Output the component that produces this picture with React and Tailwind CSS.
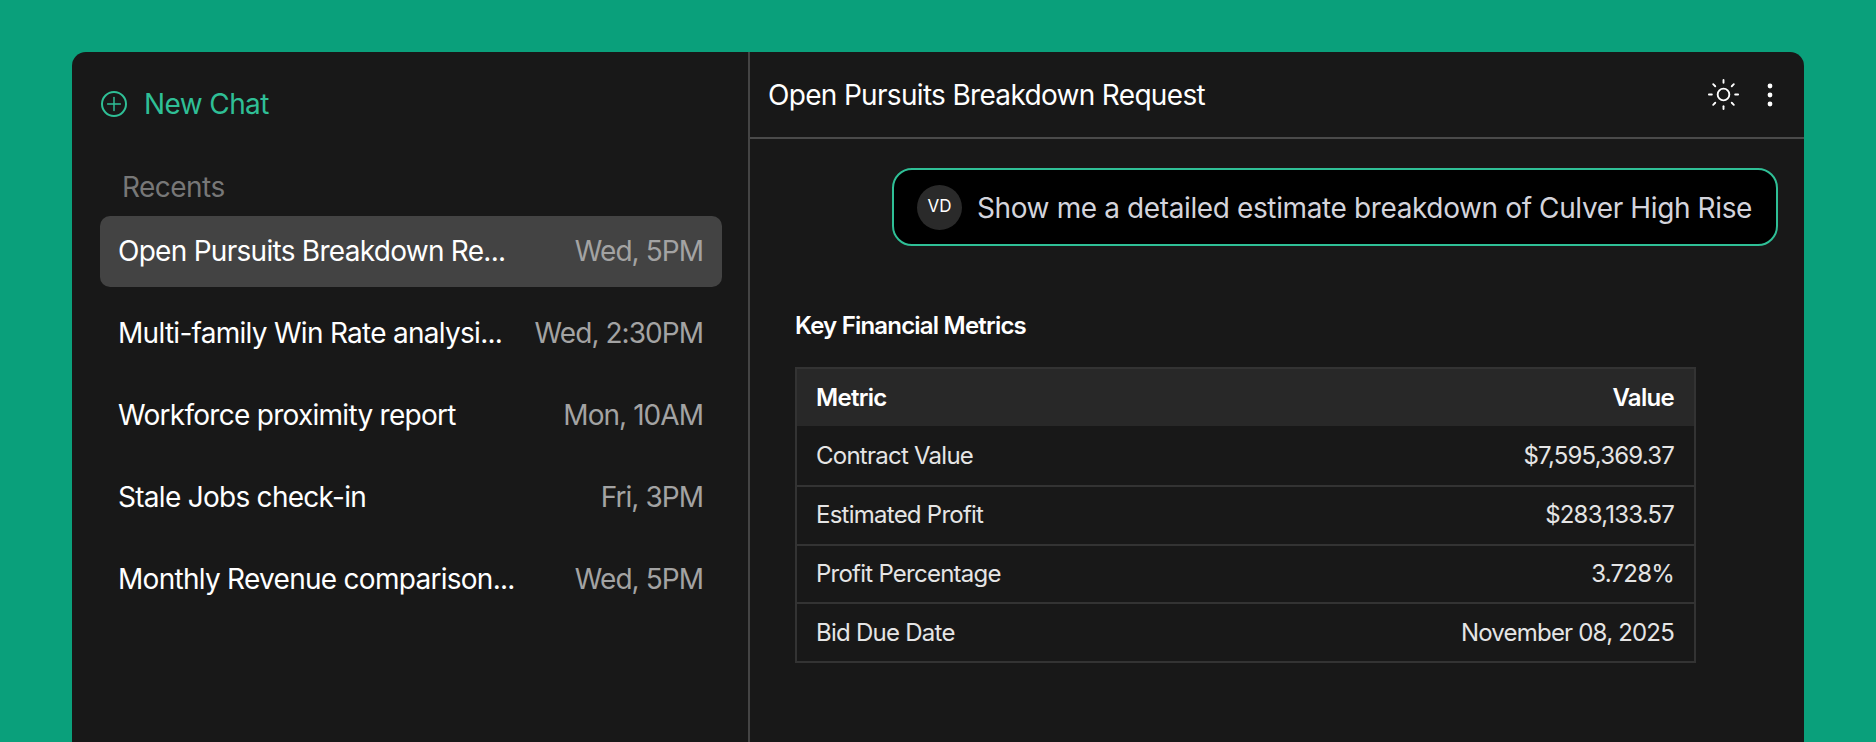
import { Plus, Sun } from 'lucide-react'

const recents = [
  { title: 'Open Pursuits Breakdown Re...', time: 'Wed, 5PM', active: true },
  { title: 'Multi-family Win Rate analysi...', time: 'Wed, 2:30PM' },
  { title: 'Workforce proximity report', time: 'Mon, 10AM' },
  { title: 'Stale Jobs check-in', time: 'Fri, 3PM' },
  { title: 'Monthly Revenue comparison...', time: 'Wed, 5PM' },
]

const metrics = [
  { label: 'Contract Value', value: '$7,595,369.37' },
  { label: 'Estimated Profit', value: '$283,133.57' },
  { label: 'Profit Percentage', value: '3.728%' },
  { label: 'Bid Due Date', value: 'November 08, 2025' },
]

function Sidebar() {
  return (
    <aside className="w-[678px] shrink-0 border-r-2 border-[#444444] pl-[28px] pr-[26px] pt-[32px]">
      <button className="flex items-center gap-[17px] text-[#2fbf96] text-[28px] tracking-[-0.6px] leading-[40px] pl-[1px]">
        <span className="flex items-center justify-center w-[26px] h-[26px] rounded-full border-2 border-[#2fbf96]">
          <Plus size={22} strokeWidth={1.6} />
        </span>
        New Chat
      </button>

      <p className="text-[#777777] text-[28px] tracking-[-0.55px] leading-[36px] pl-[22px] mt-[45px] mb-[11px]">Recents</p>

      <div className="flex flex-col gap-[11px]">
        {recents.map((item) => (
          <div
            key={item.title}
            className={`flex items-center justify-between h-[71px] pl-[18px] pr-[19px] pb-[2px] rounded-[10px] text-[28px] ${item.active ? 'bg-[#434343]' : ''}`}
          >
            <span className="text-white tracking-[-0.72px] whitespace-nowrap">{item.title}</span>
            <span className="text-[#a3a3a3] tracking-[-0.95px] whitespace-nowrap">{item.time}</span>
          </div>
        ))}
      </div>
    </aside>
  )
}

function MetricsTable() {
  return (
    <div className="w-[901px] border-2 border-[#333333] text-[24px]">
      <div className="flex items-center justify-between h-[57px] pl-[19px] pr-[20px] bg-[#282828] text-white font-semibold tracking-[-0.7px]">
        <span>Metric</span>
        <span>Value</span>
      </div>
      {metrics.map((row, i) => (
        <div
          key={row.label}
          className={`flex items-center justify-between h-[58.75px] pl-[19px] pr-[20px] text-[#e5e5e5] ${i > 0 ? 'border-t-2 border-[#333333]' : 'pt-[2px]'}`}
        >
          <span className="tracking-[-0.75px]">{row.label}</span>
          <span className="tracking-[-0.8px]">{row.value}</span>
        </div>
      ))}
    </div>
  )
}

export default function App() {
  return (
    <div className="h-[742px] overflow-hidden bg-[#0aa07b] pt-[52px] px-[72px] font-['Inter',sans-serif]">
      <div className="flex h-full bg-[#181818] rounded-t-[14px] overflow-hidden">
        <Sidebar />

        <main className="flex-1 min-w-0">
          <header className="flex items-center justify-between h-[87px] border-b-2 border-[#4a4a4a] pl-[18px] pr-[31px]">
            <h1 className="text-white text-[28px] tracking-[-0.68px]">Open Pursuits Breakdown Request</h1>
            <div className="flex items-center gap-[26px]">
              <Sun size={35} strokeWidth={1.3} className="text-white" />
              <svg width="6" height="24" viewBox="0 0 6 24" className="text-white" fill="currentColor">
                <circle cx="3" cy="3" r="2.4" />
                <circle cx="3" cy="12" r="2.4" />
                <circle cx="3" cy="21" r="2.4" />
              </svg>
            </div>
          </header>

          <div className="flex justify-end pr-[26px] pt-[29px]">
            <div className="flex items-center gap-[15px] h-[78px] pl-[23px] pr-[24px] bg-black border-2 border-[#2fbf96] rounded-[20px]">
              <span className="flex items-center justify-center w-[45px] h-[45px] rounded-full bg-[#2a2a2a] text-white text-[17px]">VD</span>
              <span className="text-[#d4d4dc] text-[28px] tracking-[-0.38px] pt-[2px] whitespace-nowrap">Show me a detailed estimate breakdown of Culver High Rise</span>
            </div>
          </div>

          <div className="pl-[45px] pt-[66px]">
            <h2 className="text-white text-[24px] tracking-[-0.8px] font-semibold leading-[28px] mb-[27px]">Key Financial Metrics</h2>
            <MetricsTable />
          </div>
        </main>
      </div>
    </div>
  )
}
